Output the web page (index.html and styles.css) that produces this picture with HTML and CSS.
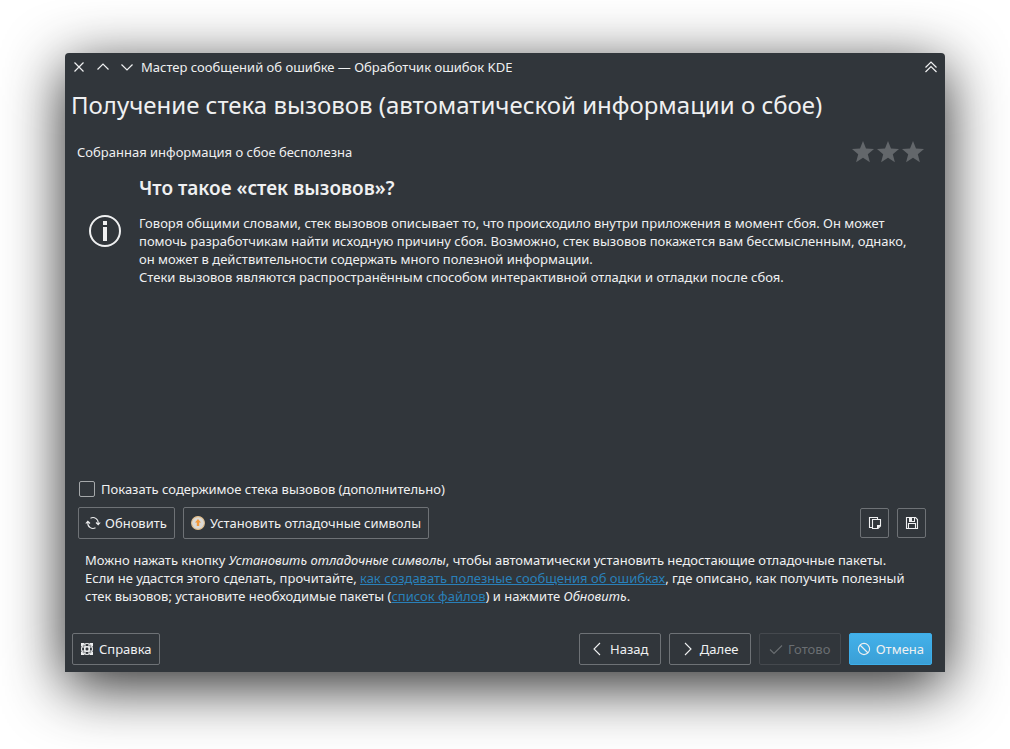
FILE: index.html
```html
<!DOCTYPE html>
<html lang="ru">
<head>
  <meta charset="UTF-8" />
  <title>Мастер сообщений об ошибке — Обработчик ошибок KDE</title>
  <meta name="viewport" content="width=device-width, initial-scale=1.0" />
  <link rel="stylesheet" href="styles.css">
</head>
<body>

<div class="window">
  <header class="titlebar">
    <button type="button" class="title-btn" aria-label="Закрыть">
      <svg viewBox="0 0 16 16"><path d="M3.5 3.5l9 9M12.5 3.5l-9 9"/></svg>
    </button>
    <button type="button" class="title-btn" aria-label="Распахнуть">
      <svg viewBox="0 0 16 16"><path d="M2.5 10.5L8 5l5.5 5.5"/></svg>
    </button>
    <button type="button" class="title-btn" aria-label="Свернуть">
      <svg viewBox="0 0 16 16"><path d="M2.5 5.5L8 11l5.5-5.5"/></svg>
    </button>
    <span class="title-text">Мастер сообщений об ошибке — Обработчик ошибок KDE</span>
    <button type="button" class="title-btn" aria-label="Свернуть в заголовок">
      <svg viewBox="0 0 16 16"><path d="M2.5 8.500L8 3l5.500 5.500M2.500 13L8 7.500l5.500 5.500"/></svg>
    </button>
  </header>

  <h1>Получение стека вызовов (автоматической информации о сбое)</h1>

  <main class="page">
    <div class="status">
      <span>Собранная информация о сбое бесполезна</span>
      <div class="stars">
        <svg viewBox="0 0 22 22"><path d="M11 0l3 7.600 8 .5-6.200 5.200 2.100 7.900L11 16.800l-6.900 4.400 2.100-7.900L0 8.100l8-.5z"/></svg>
        <svg viewBox="0 0 22 22"><path d="M11 0l3 7.600 8 .5-6.200 5.200 2.100 7.900L11 16.800l-6.900 4.400 2.100-7.900L0 8.100l8-.5z"/></svg>
        <svg viewBox="0 0 22 22"><path d="M11 0l3 7.600 8 .5-6.200 5.200 2.100 7.900L11 16.800l-6.900 4.400 2.100-7.900L0 8.100l8-.5z"/></svg>
      </div>
    </div>

    <section class="about">
      <svg class="info-icon" viewBox="0 0 32 32">
        <circle cx="16" cy="16" r="15"/>
        <rect x="14" y="6" width="4" height="4"/>
        <rect x="14" y="12" width="4" height="14"/>
      </svg>
      <div>
        <h2>Что такое «стек вызовов»?</h2>
        <p>Говоря общими словами, стек вызовов описывает то, что происходило внутри приложения в момент сбоя. Он может помочь разработчикам найти исходную причину сбоя. Возможно, стек вызовов покажется вам бессмысленным, однако, он может в действительности содержать много полезной информации.</p>
        <p>Стеки вызовов являются распространённым способом интерактивной отладки и отладки после сбоя.</p>
      </div>
    </section>

    <div class="show-trace">
      <input type="checkbox" id="showTrace" />
      <label for="showTrace">Показать содержимое стека вызовов (дополнительно)</label>
    </div>

    <div class="tools">
      <button type="button" class="btn">
        <svg class="icon" viewBox="0 0 16 16"><path d="M5.500 3.200A5.200 5.200 0 0 1 13.200 8v1.500M11 7.500l2.200 2.200 2-2.200M10.500 12.800A5.200 5.200 0 0 1 2.800 8V6.500M.800 8.500l2-2.200L5 8.500"/></svg>
        Обновить
      </button>
      <button type="button" class="btn">
        <svg class="icon" viewBox="0 0 16 16">
          <circle cx="8" cy="8" r="6.400" fill="#dcdad5" stroke="#e3bf8c"/>
          <path d="M8 4l3 3.400H9.200V11H6.800V7.400H5z" fill="#f39a3c" stroke="none"/>
        </svg>
        Установить отладочные символы
      </button>
      <button type="button" class="btn btn-icon push" aria-label="Копировать">
        <svg class="icon" viewBox="0 0 16 16"><path d="M5 12.500H2.500v-10h8V4M5.500 4.500h8V11L11 13.500H5.500z"/><path class="solid" d="M10 10h4l-4 4z"/></svg>
      </button>
      <button type="button" class="btn btn-icon" aria-label="Сохранить">
        <svg class="icon" viewBox="0 0 16 16"><path d="M2.500 2.500h9l2 2v9h-11zM4.500 13V8.500h7V13"/><path class="solid" d="M5 2h6v5H5z"/><path class="hole" d="M8 3h2v3H8z"/></svg>
      </button>
    </div>

    <p class="hint">Можно нажать кнопку <i>Установить отладочные символы</i>, чтобы автоматически установить недостающие отладочные пакеты. Если не удастся этого сделать, прочитайте, <a href="#">как создавать полезные сообщения об ошибках</a>, где описано, как получить полезный стек вызовов; установите необходимые пакеты (<a href="#">список файлов</a>) и нажмите <i>Обновить</i>.</p>
  </main>

  <footer class="actions">
    <button type="button" class="btn">
      <svg class="icon" viewBox="0 0 16 16"><circle cx="8" cy="8" r="5.500"/><circle cx="8" cy="8" r="2.500"/><path d="M6 2.500v11M10 2.500v11M2.500 6h11M2.500 10h11"/><path class="solid" d="M2 2h3v1L3 5H2zM14 2h-3v1l2 2h1zM2 14h3v-1l-2-2H2zM14 14h-3v-1l2-2h1z"/></svg>
      Справка
    </button>
    <button type="button" class="btn nav push">
      <svg class="icon" viewBox="0 0 16 16"><path d="M10 2L4 8l6 6"/></svg>
      Назад
    </button>
    <button type="button" class="btn nav">
      <svg class="icon" viewBox="0 0 16 16"><path d="M5 2l6 6-6 6"/></svg>
      Далее
    </button>
    <button type="button" class="btn nav" disabled>
      <svg class="icon" viewBox="0 0 16 16"><path d="M2 8.500l4 4 8-8"/></svg>
      Готово
    </button>
    <button type="button" class="btn nav primary">
      <svg class="icon" viewBox="0 0 16 16"><circle cx="8" cy="8" r="5.600"/><path d="M4 4l8 8"/></svg>
      Отмена
    </button>
  </footer>
</div>

</body>
</html>
```
FILE: styles.css
```css
* { box-sizing: border-box; }
body {
  margin: 0;
  min-height: 100vh;
  padding: 53px 65px 77px;
  display: flex;
  background: #fff;
  color: #eff0f1;
  font: 13px/18px "Noto Sans", "Open Sans", sans-serif;
}
h1, h2, p { margin: 0; }
.window {
  flex: 1;
  min-width: 0;
  display: flex;
  flex-direction: column;
  background: #31363b;
  border-radius: 4px 4px 0 0;
  box-shadow: 0 14px 60px rgba(0, 0, 0, 0.85);
}

.titlebar {
  display: flex;
  align-items: center;
  gap: 8px;
  height: 28px;
  padding: 0 6px;
}
.title-btn {
  width: 16px;
  height: 16px;
  padding: 0;
  border: none;
  background: none;
  color: inherit;
}
.title-btn svg {
  display: block;
  fill: none;
  stroke: currentColor;
  stroke-width: 1.2;
}
.title-text {
  flex: 1;
  margin-left: -2px;
}

h1 {
  padding: 6px 6px 0;
  font-size: 24px;
  font-weight: 400;
  line-height: 36px;
}

.page {
  flex: 1;
  display: flex;
  flex-direction: column;
  padding: 16px 19px 0 12px;
}
.status {
  display: flex;
  align-items: center;
  justify-content: space-between;
  height: 26px;
  padding: 0 2px 0 0;
}
.stars {
  display: flex;
  gap: 3px;
}
.stars svg {
  width: 22px;
  height: 22px;
  fill: #63676b;
}

.about {
  display: flex;
  align-items: center;
  gap: 18px;
  padding: 10px 10px 0 12px;
}
.info-icon {
  flex: none;
  width: 32px;
  height: 32px;
  fill: #eff0f1;
}
.info-icon circle {
  fill: none;
  stroke: #eff0f1;
  stroke-width: 2;
}
h2 {
  margin-bottom: 13px;
  font-size: 19px;
  font-weight: 600;
  line-height: 26px;
}

.show-trace {
  display: flex;
  align-items: center;
  gap: 6px;
  margin-top: auto;
  padding: 0 2px;
}
.show-trace input {
  appearance: none;
  width: 16px;
  height: 16px;
  margin: 0;
  border: 1px solid #a5a8aa;
  border-radius: 2px;
}

.tools {
  display: flex;
  align-items: center;
  gap: 8px;
  padding: 9px 0 12px 1px;
}
.btn {
  display: flex;
  align-items: center;
  gap: 4px;
  height: 32px;
  padding: 0 7px 0 6px;
  border: 1px solid #6e7276;
  border-radius: 2px;
  background: #31363b;
  color: inherit;
  font: inherit;
}
.icon {
  width: 16px;
  height: 16px;
  fill: none;
  stroke: currentColor;
  stroke-width: 1.1;
}
.icon .solid {
  fill: currentColor;
  stroke: none;
}
.icon .hole {
  fill: #31363b;
  stroke: none;
}
.btn-icon {
  justify-content: center;
  width: 29px;
  height: 30px;
  padding: 0;
}
.push { margin-left: auto; }

.hint {
  padding: 0 14px 0 8px;
}
a { color: #2980b9; }

.actions {
  display: flex;
  gap: 8px;
  padding: 28px 13px 7px 7px;
}
.nav {
  justify-content: center;
  min-width: 82px;
}
.btn:disabled {
  border-color: #45494e;
  color: #6a6e72;
}
.primary {
  border-color: #3daee9;
  background: linear-gradient(#43b1ea, #3a9fd6);
}
```
